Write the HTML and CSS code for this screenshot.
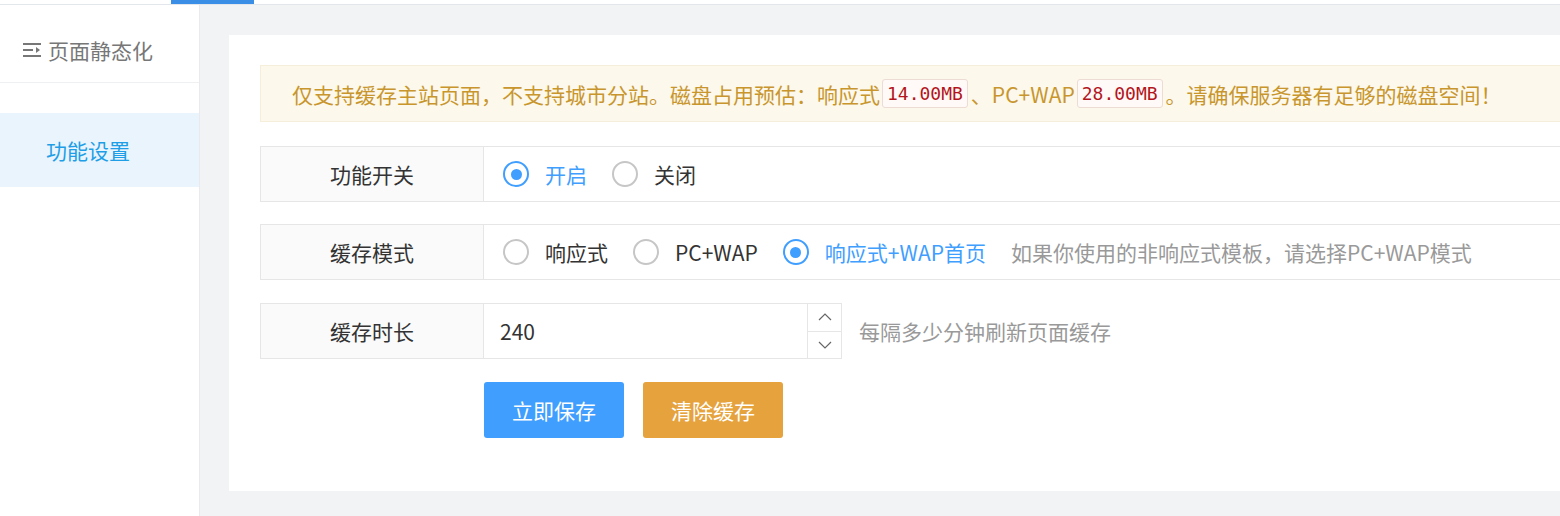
FILE: index.html
```html
<!DOCTYPE html>
<html lang="zh-CN">
<head>
  <meta charset="UTF-8" />
  <meta name="viewport" content="width=device-width, initial-scale=1.0"/>
  <title>页面静态化</title>
  <link rel="stylesheet" href="styles.css">
</head>
<body>
  <div class="topbar"><span class="tab-line"></span></div>

  <div class="layout">
    <aside class="side">
      <div class="side-head">
        <svg class="side-icon" width="18" height="16" viewBox="0 0 18 16">
          <rect x="0" y="1" width="18" height="2" fill="#777"/>
          <rect x="0" y="7" width="10" height="2" fill="#777"/>
          <polygon points="13,5 17,8 13,11" fill="#777"/>
          <rect x="0" y="13" width="18" height="2" fill="#777"/>
        </svg>
        <span>页面静态化</span>
      </div>
      <ul class="side-nav">
        <li class="active">功能设置</li>
      </ul>
    </aside>

    <main class="main">
      <div class="card">
        <div class="alert">
          仅支持缓存主站页面，不支持城市分站。磁盘占用预估：响应式<code>14.00MB</code>、PC+WAP<code>28.00MB</code>。请确保服务器有足够的磁盘空间！
        </div>

        <div class="row">
          <div class="row-label">功能开关</div>
          <div class="row-value">
            <label class="radio on"><span class="radio-dot"></span>开启</label>
            <label class="radio"><span class="radio-dot"></span>关闭</label>
          </div>
        </div>

        <div class="row">
          <div class="row-label">缓存模式</div>
          <div class="row-value">
            <label class="radio"><span class="radio-dot"></span>响应式</label>
            <label class="radio"><span class="radio-dot"></span>PC+WAP</label>
            <label class="radio on"><span class="radio-dot"></span>响应式+WAP首页</label>
            <span class="hint">如果你使用的非响应式模板，请选择PC+WAP模式</span>
          </div>
        </div>

        <div class="field-row">
          <div class="row short">
            <div class="row-label">缓存时长</div>
            <input class="num-input" type="text" value="240" />
            <div class="spinner">
              <span class="spin-btn">
                <svg width="14" height="8" viewBox="0 0 14 8"><polyline points="1,7 7,1 13,7" fill="none" stroke="#666" stroke-width="1.2"/></svg>
              </span>
              <span class="spin-btn">
                <svg width="14" height="8" viewBox="0 0 14 8"><polyline points="1,1 7,7 13,1" fill="none" stroke="#666" stroke-width="1.2"/></svg>
              </span>
            </div>
          </div>
          <span class="hint">每隔多少分钟刷新页面缓存</span>
        </div>

        <div class="actions">
          <button type="button" class="btn btn-blue">立即保存</button>
          <button type="button" class="btn btn-orange">清除缓存</button>
        </div>
      </div>
    </main>
  </div>
</body>
</html>
```

FILE: styles.css
```css
* {
  box-sizing: border-box;
}

html, body {
  margin: 0;
  height: 100%;
}

body {
  font-family: "Noto Sans CJK SC", "Noto Sans", sans-serif;
  font-size: 21px;
  color: #333;
  background: #f2f3f5;
  overflow: hidden;
}

.topbar {
  height: 5px;
  background: #fff;
  border-bottom: 1px solid #e3e6ea;
  padding-left: 171px;
}

.tab-line {
  display: block;
  width: 83px;
  height: 4px;
  background: #3a8ee6;
}

.layout {
  display: flex;
  height: calc(100% - 5px);
}

/* sidebar */
.side {
  width: 200px;
  flex-shrink: 0;
  background: #fff;
  border-right: 1px solid #e8eaec;
}

.side-head {
  height: 78px;
  padding: 12px 0 0 23px;
  display: flex;
  align-items: center;
  gap: 7px;
  color: #777;
  border-bottom: 1px solid #eef0f2;
}

.side-nav {
  list-style: none;
  margin: 30px 0 0;
  padding: 0;
}

.side-nav li {
  height: 74px;
  line-height: 74px;
  padding-left: 46px;
}

.side-nav .active {
  background: #eaf4fd;
  color: #1e9ee6;
}

/* main */
.main {
  flex: 1;
  padding: 30px 0 0 29px;
  overflow: hidden;
}

.card {
  background: #fff;
  margin-right: -40px;
  padding: 30px 0 53px 31px;
}

.alert {
  height: 57px;
  display: flex;
  align-items: center;
  padding-left: 31px;
  margin-bottom: 24px;
  background: #fcf8ec;
  border: 1px solid #f5eedb;
  color: #c8962c;
  white-space: nowrap;
}

.alert code {
  font-family: "DejaVu Sans Mono", monospace;
  font-size: 18px;
  line-height: 21px;
  color: #b3151c;
  background: #fffaf8;
  border: 1px solid #ecdcd4;
  border-radius: 3px;
  padding: 3px 4px;
  margin: 0 3px 0 2px;
}

.row {
  display: flex;
  height: 56px;
  border: 1px solid #e6e6e6;
  margin-bottom: 22px;
}

.row + .row {
  margin-bottom: 23px;
}

.row-label {
  width: 223px;
  flex-shrink: 0;
  display: flex;
  align-items: center;
  justify-content: center;
  background: #fafafa;
  border-right: 1px solid #e6e6e6;
}

.row-value {
  flex: 1;
  display: flex;
  align-items: center;
  gap: 25px;
  padding-left: 19px;
  white-space: nowrap;
}

.radio {
  display: flex;
  align-items: center;
  gap: 16px;
  cursor: pointer;
}

.radio-dot {
  width: 26px;
  height: 26px;
  border: 2px solid #c6c6c6;
  border-radius: 50%;
  display: flex;
  align-items: center;
  justify-content: center;
}

.radio.on {
  color: #409eff;
}

.radio.on .radio-dot {
  border-color: #409eff;
}

.radio.on .radio-dot::after {
  content: "";
  width: 11px;
  height: 11px;
  border-radius: 50%;
  background: #409eff;
}

.hint {
  color: #999;
}

.field-row {
  display: flex;
  align-items: center;
  gap: 17px;
  margin-bottom: 23px;
}

.row.short {
  margin-bottom: 0;
}

.num-input {
  width: 323px;
  border: none;
  outline: none;
  padding: 0 16px;
  font-family: inherit;
  font-size: 21px;
  color: #333;
}

.spinner {
  width: 34px;
  display: flex;
  flex-direction: column;
  border-left: 1px solid #e6e6e6;
}

.spin-btn {
  flex: 1;
  display: flex;
  align-items: center;
  justify-content: center;
}

.spin-btn + .spin-btn {
  border-top: 1px solid #e6e6e6;
}

.actions {
  display: flex;
  gap: 19px;
  margin-left: 224px;
}

.btn {
  width: 140px;
  height: 56px;
  border: none;
  border-radius: 3px;
  color: #fff;
  font-family: inherit;
  font-size: 21px;
  cursor: pointer;
}

.btn-blue {
  background: #409eff;
}

.btn-orange {
  background: #e6a23c;
}
```
